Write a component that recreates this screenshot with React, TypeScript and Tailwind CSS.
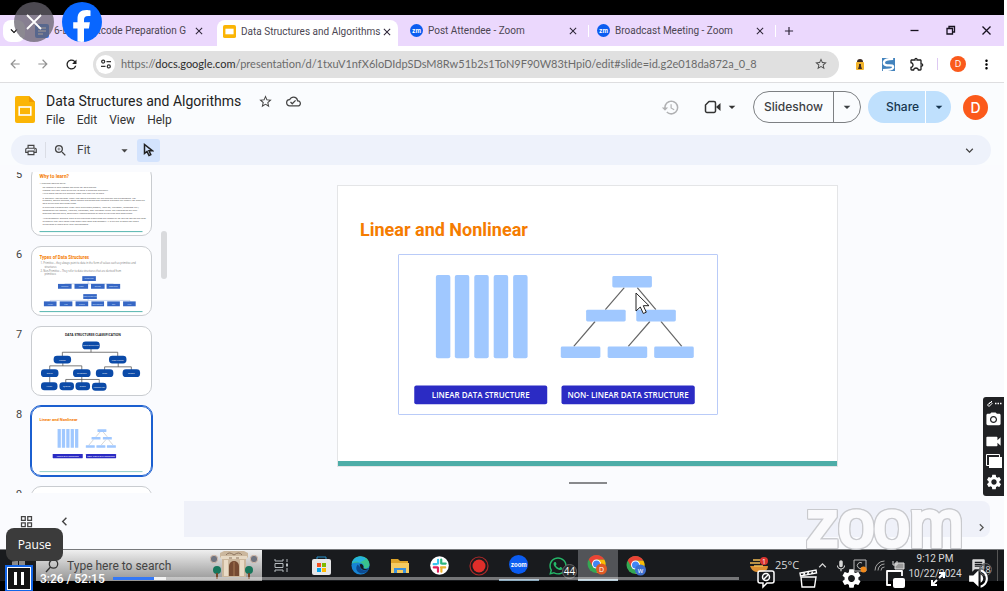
import React from "react";
import {
  MdArrowDropDown, MdCameraAlt, MdClose, MdExpandLess, MdExpandMore, MdHistory, MdMoreVert,
  MdOutlineCloudDone, MdOutlineExtension, MdOutlinePrint, MdRefresh, MdSettings, MdStarBorder,
  MdVideocam, MdZoomIn, MdArrowBack, MdArrowForward, MdChevronLeft, MdChevronRight, MdAdd,
  MdMic, MdOutlineGridView, MdVolumeUp, MdMessage,
} from "react-icons/md";
import { FaWhatsapp } from "react-icons/fa";

const SANS = "font-['Open_Sans',sans-serif]";

function SlidesMark({ className }: { className: string }) {
  return (
    <svg viewBox="0 0 20 27" className={className} aria-hidden="true">
      <path d="M2 0h12l6 6v19a2 2 0 0 1-2 2H2a2 2 0 0 1-2-2V2a2 2 0 0 1 2-2Z" fill="#fbb505" />
      <path d="m14 0 6 6h-6Z" fill="#f09a00" />
      <rect x="4.2" y="11" width="11.6" height="8" fill="none" stroke="#fff" strokeWidth="1.6" />
    </svg>
  );
}

function ZoomBadge({ label, className }: { label: string; className: string }) {
  return (
    <span className={"flex shrink-0 items-center justify-center rounded-full bg-[#0b5cf0] font-['Inter',sans-serif] font-bold text-white " + className}>
      {label}
    </span>
  );
}

function Tab({ title, icon, active, width }: { title: string; icon: React.ReactNode; active?: boolean; width: string }) {
  return (
    <div className={"flex shrink-0 items-center " + width + (active ? " mt-[5px] h-[26px] rounded-t-lg bg-white pb-[3px]" : " h-8")}>
      {icon}
      <span className="ml-[5px] min-w-0 flex-1 overflow-hidden font-['Roboto',sans-serif] text-[10px] whitespace-nowrap text-[#4b4652]">{title}</span>
      <button aria-label={"Close " + title} className="shrink-0 text-[#2d2538]"><MdClose size={12} /></button>
    </div>
  );
}

function TabStrip() {
  return (
    <div className="flex h-[31px] shrink-0 items-center overflow-hidden bg-[#ebd8fd]">
      <button aria-label="Search tabs" className="ml-[3px] flex h-[22px] w-[22px] shrink-0 items-center justify-center rounded-lg bg-white"><MdExpandMore size={14} /></button>
      <Tab width="w-[192px] pl-[10px] pr-[12px]" title="6-Day Leetcode Preparation G" icon={
        <svg viewBox="0 0 14 14" className="h-[14px] w-[14px] shrink-0" aria-hidden="true"><rect width="14" height="14" rx="2" fill="#3079ed" /><path d="M3 4h8M3 7h8M3 10h5" stroke="#fff" strokeWidth="1.3" /></svg>
      } />
      <Tab active width="w-[181px] pl-[6px] pr-[5px]" title="Data Structures and Algorithms" icon={
        <svg viewBox="0 0 14 14" className="h-[13px] w-[13px] shrink-0" aria-hidden="true"><rect width="14" height="14" rx="2" fill="#fbb505" /><rect x="2.6" y="4" width="8.8" height="6" fill="#fff" /></svg>
      } />
      <Tab width="w-[190px] pl-[12px] pr-[9px]" title="Post Attendee - Zoom" icon={<ZoomBadge label="zm" className="h-[13px] w-[13px] text-[6px]" />} />
      <span className="h-3 w-px shrink-0 bg-white" />
      <Tab width="w-[186px] pl-[8px] pr-[9px]" title="Broadcast Meeting - Zoom" icon={<ZoomBadge label="zm" className="h-[13px] w-[13px] text-[6px]" />} />
      <span className="h-3 w-px shrink-0 bg-white" />
      <button aria-label="New tab" className="ml-[6px] text-[#2d2538]"><MdAdd size={14} /></button>
      <div className="ml-auto flex shrink-0 items-center gap-[25px] pr-[12px] text-[#17121f]">
        <button aria-label="Minimize"><svg width="11" height="11"><path d="M1.500 5.500h8" stroke="currentColor" strokeWidth="1.300" /></svg></button>
        <button aria-label="Restore"><svg width="11" height="11" fill="none" stroke="currentColor" strokeWidth="1.300"><path d="M2 3.500h5.500V9H2zM4 3.500v-2h5.500V7h-2" /></svg></button>
        <button aria-label="Close window"><svg width="11" height="11"><path d="m1.500 1.500 8 8m0-8-8 8" stroke="currentColor" strokeWidth="1.300" /></svg></button>
      </div>
    </div>
  );
}

function AddressBar() {
  return (
    <div className="flex h-9 shrink-0 items-center bg-white pr-[10px] pl-[8px]">
      <button aria-label="Back" className="mr-[14px] text-[#929292]"><MdArrowBack size={14} /></button>
      <button aria-label="Forward" className="mr-[14px] text-[#929292]"><MdArrowForward size={14} /></button>
      <button aria-label="Reload" className="mr-[14px] text-[#222]"><MdRefresh size={15} /></button>
      <div className="flex h-[27px] min-w-0 flex-1 items-center rounded-full bg-[#e0e0e0] pr-[11px] pl-[3px]">
        <button aria-label="Site information" className="mr-[6px] flex h-[19px] w-[19px] shrink-0 items-center justify-center rounded-full bg-white">
          <svg width="10" height="10" fill="none" stroke="#333" strokeWidth="1.300"><circle cx="2.200" cy="2.600" r="1.500" /><path d="M5.500 2.600H10M0 7.400h4.500" /><circle cx="7.800" cy="7.400" r="1.500" /></svg>
        </button>
        <span className="min-w-0 flex-1 overflow-hidden font-['Lato',sans-serif] text-[11px] whitespace-nowrap text-[#6b6b6b]">
          https://<span className="text-[#2c2c2c]">docs.google.com</span>/presentation/d/1txuV1nfX6loDIdpSDsM8Rw51b2s1ToN9F90W83tHpi0/edit#slide=id.g2e018da872a_0_8
        </span>
        <button aria-label="Bookmark" className="text-[#4d4d4d]"><MdStarBorder size={14} /></button>
      </div>
      <div className="flex shrink-0 items-center pl-[17px]">
        <svg width="8" height="12" viewBox="0 0 8 12" className="mr-[18px]" aria-hidden="true"><rect y="4" width="8" height="8" rx="1" fill="#f2b42c" /><path d="M1 4a3 3 0 0 1 6 0Z" fill="#3b2a23" /><path d="M3 6h2v2l1 3H2l1-3Z" fill="#3b2a23" /></svg>
        <svg width="13" height="13" viewBox="0 0 14 14" className="mr-[14px]" aria-hidden="true"><rect width="14" height="14" fill="#4383bd" /><path d="M12 1C5 1 2 2 2 5s3 3 6 3 4 0 4 2-3 3-11 3" fill="none" stroke="#fff" strokeWidth="2.500" /></svg>
        <button aria-label="Extensions" className="text-[#222]"><MdOutlineExtension size={16} /></button>
        <span className="mx-[12px] h-3 w-px bg-[#ddc9f2]" />
        <span className="flex h-[16px] w-[16px] items-center justify-center rounded-full bg-[#fa5a1c] text-[9px] text-white">D</span>
        <button aria-label="Browser menu" className="ml-[13px]"><MdMoreVert size={15} /></button>
      </div>
    </div>
  );
}

function DocHeader() {
  return (
    <header className="flex h-[53px] shrink-0 items-start border-t border-[#dedee0] bg-[#fafcfe] pr-[16px] pl-[15px]">
      <SlidesMark className="mt-[13px] h-[27px] w-5" />
      <div className="ml-[11px] pt-[9px]">
        <div className="flex h-[18px] items-center">
          <h1 className="text-[14px] leading-[18px] whitespace-nowrap text-[#222] font-['Roboto',sans-serif]">Data Structures and Algorithms</h1>
          <button aria-label="Star" className="ml-[17px] text-[#444]"><MdStarBorder size={15} /></button>
          <button aria-label="Saved to Drive" className="ml-[13px] text-[#444]"><MdOutlineCloudDone size={15} /></button>
        </div>
        <nav className="flex gap-[12px] text-[12px] leading-[20px] text-[#333] font-['Roboto',sans-serif]">
          {["File", "Edit", "View", "Help"].map((m) => <button key={m}>{m}</button>)}
        </nav>
      </div>
      <div className="ml-auto flex items-center pt-[8px] font-['Inter',sans-serif] text-[12px] font-medium">
        <button aria-label="Version history" className="mr-[24px] text-[#b0b1b3]"><MdHistory size={19} /></button>
        <button aria-label="Start a call" className="mr-[13px] flex items-center text-[#333]">
          <svg width="18" height="14" viewBox="0 0 18 14"><path d="M5 1.500h5a1.500 1.500 0 0 1 1.500 1.500v8a1.500 1.500 0 0 1-1.500 1.500H3A1.500 1.500 0 0 1 1.500 11V5Z" fill="none" stroke="currentColor" strokeWidth="1.500" strokeLinejoin="round" /><path d="m12 7 4.500-4v8Z" fill="currentColor" /></svg>
          <MdArrowDropDown size={16} className="ml-[2px]" />
        </button>
        <div className="mr-[7px] flex h-8 w-[108px] rounded-full border border-[#7d8083] text-[#3c4043]">
          <button className="flex-1">Slideshow</button>
          <button aria-label="Slideshow options" className="flex w-[27px] items-center justify-center border-l border-[#7d8083]"><MdArrowDropDown size={16} /></button>
        </div>
        <div className="mr-[12px] flex h-8 w-[83px] overflow-hidden rounded-full bg-[#bfe0fd] text-[#16354f]">
          <button className="flex-1 pl-[12px]">Share</button>
          <button aria-label="Share options" className="flex w-[26px] items-center justify-center border-l border-white"><MdArrowDropDown size={16} /></button>
        </div>
        <button aria-label="Account" className="h-[25px] w-[25px] rounded-full bg-[#fb5a1b] text-[14px] text-white">D</button>
      </div>
    </header>
  );
}

function Toolbar() {
  return (
    <div className="shrink-0 bg-[#fafcfe] pr-[13px] pl-[11px]">
      <div className="flex h-[30px] items-center rounded-full bg-[#eef2fb] pr-[14px] pl-[13px] text-[#444]">
        <button aria-label="Print"><MdOutlinePrint size={14} /></button>
        <span className="mx-[7px] h-4 w-px bg-[#dadde5]" />
        <button aria-label="Zoom"><MdZoomIn size={15} /></button>
        <button className="ml-[9px] flex w-[55px] items-center justify-between font-['Roboto',sans-serif] text-[12px]">Fit<MdArrowDropDown size={15} /></button>
        <button aria-label="Select" className="ml-[5px] flex h-[23px] w-[23px] items-center justify-center rounded-[3px] bg-[#d3e3fd]">
          <svg width="11" height="14" viewBox="0 0 11 14"><path d="M1.500 1.500v9l2.500-2 2 4 1.800-.9L6 7.800h3.500Z" fill="none" stroke="#222" strokeWidth="1.500" /></svg>
        </button>
        <button aria-label="Collapse toolbar" className="ml-auto"><MdExpandMore size={15} /></button>
      </div>
    </div>
  );
}

function Structures({ className }: { className: string }) {
  return (
    <svg viewBox="0 0 319 159" className={className} role="img" aria-label="Linear and non-linear data structures">
      <g fill="#a0c8ff">
        {[37, 56, 75.5, 95, 114.5].map((x) => <rect key={x} x={x} y="20" width="14.500" height="83.500" rx="2" />)}
      </g>
      <g stroke="#666" strokeWidth="1.200">
        <path d="m226 32.700-19 22M239 32.700l18.700 22M196.700 66.700l-21.400 25M251.700 66.700l-21.700 25M262.700 66.700l21 25" />
      </g>
      <g fill="#a0c8ff">
        {[[214, 21], [187.700, 55], [238, 55], [162.300, 91.700], [209.300, 91.700], [256, 91.700]].map(([x, y]) => (
          <rect key={x + "-" + y} x={x} y={y} width="39.700" height="11.700" rx="1.500" />
        ))}
      </g>
      <g fill="#2b2bc4"><rect x="15.300" y="131" width="133.400" height="18.800" rx="2" /><rect x="163" y="131" width="133.700" height="18.800" rx="2" /></g>
      <g fill="#fff" fontSize="8" fontWeight="600" textAnchor="middle" fontFamily="Open Sans, sans-serif">
        <text x="82" y="143.500">LINEAR DATA STRUCTURE</text>
        <text x="229.800" y="143.500">NON- LINEAR DATA STRUCTURE</text>
      </g>
    </svg>
  );
}

const HEAD = "Roboto, sans-serif";

function WhyThumb() {
  const lines: [number, number, string][] = [
    [7, 17, "1.Problem-Solving Skills:"],
    [10, 21.5, "To recognize and choose patterns for data scaling"],
    [10, 24.5, "Choose the right data structure to solve a problem efficiently"],
    [10, 27.500, "Write more optimized efficient code that can run to scale"],
    [10, 32.500, "2. Scalable Applications: Many real world systems rely on efficient data processing. For"],
    [10, 35.500, "example, search engines, social media platforms and financial systems rely heavily on effective"],
    [10, 38.500, "data structures and algorithms."],
    [10, 42.500, "3.Interview Preparation: Most tech interviews (Google, Amazon, Microsoft, Facebook etc.)"],
    [10, 45.500, "companies like Google, Amazon, Facebook, and Microsoft often test candidates on their"],
    [10, 48.500, "problem-solving skills, specifically understanding of data structures and algorithms."],
    [10, 53.500, "4.Performance: Efficient data structures and algorithms are essential for writing optimized code"],
    [10, 56.500, "to ensure that your code runs faster and uses less memory. It is critical in apps that need"],
    [10, 59.500, "to perform at scale with your environment."],
  ];
  return (
    <svg viewBox="0 0 121 70" className="h-full w-full" aria-label="Why to learn?">
      <text x="7" y="11" fontSize="5" fontWeight="700" fill="#f57c00" fontFamily={HEAD}>Why to learn?</text>
      {lines.map(([x, y, t]) => <text key={y} x={x} y={y} fontSize="2.400" fill="#444" fontFamily="Open Sans, sans-serif">{t}</text>)}
      <path d="M7 66.500h106" stroke="#50b3ab" strokeWidth="1" />
    </svg>
  );
}

function TypesThumb() {
  const node = (x: number, y: number, t: string, w = 14) => (
    <g key={t + x}><rect x={x} y={y} width={w} height="5" fill="#3667c5" /><text x={x + w / 2} y={y + 3.400} fontSize="2.300" fill="#dce7ff" textAnchor="middle" fontFamily="Open Sans, sans-serif">{t}</text></g>
  );
  return (
    <svg viewBox="0 0 121 70" className="h-full w-full" aria-label="Types of Data Structures">
      <text x="7" y="12" fontSize="4.600" fontWeight="700" fill="#f57c00" fontFamily={HEAD}>Types of Data Structures</text>
      <g fontSize="2.600" fill="#777" fontFamily="Open Sans, sans-serif">
        <text x="8" y="18">1.  Primitive – they always point to data in the form of values such as primitive and</text><text x="12" y="21.500">structures</text>
        <text x="8" y="25.500">2.  Non-Primitive – They refer to data structures that are derived from</text><text x="12" y="29">primitives</text>
      </g>
      <path d="M57 35v3M33 40v-2h50v2M57 52v3M18 57v-2h82v2" fill="none" stroke="#9bb3dd" strokeWidth=".5" />
      {node(51, 30, "Primitive")}
      {node(26, 38, "Integer")}{node(43, 38, "Float")}{node(60, 38, "String")}{node(76, 38, "Boolean")}
      {node(52, 48.500, "Non-Primitive")}
      {["Array", "List", "Tuple", "Dictionary", "Set", "File"].map((t, i) => node(11.500 + i * 16.300, 56, t, 13))}
      <path d="M7 66.500h106" stroke="#50b3ab" strokeWidth="1" />
    </svg>
  );
}

function ClassThumb() {
  const nodes: [number, number, string, number][] = [
    [60, 19, "Data Structure", 18], [30.500, 33.500, "Linear", 18], [87.500, 33.500, "Non-Linear", 18],
    [17.500, 47.500, "Static", 18], [50.500, 47.500, "Dynamic", 18], [74, 47.500, "Tree", 18], [101.500, 47.500, "Graph", 18],
    [17, 61, "Array", 17], [35, 61, "Queue", 15], [51.500, 61, "Stack", 15], [68.500, 61.500, "Linked List", 15],
  ];
  return (
    <svg viewBox="0 0 121 70" className="h-full w-full" aria-label="Data structures classification">
      <text x="62" y="9" fontSize="3.300" fontWeight="700" fill="#222" textAnchor="middle" fontFamily="Open Sans, sans-serif">DATA STRUCTURES CLASSIFICATION</text>
      <path d="M60 22v4M30.500 31v-5h57v5M31 36v4M17.500 45v-5h33v5M88 36v5M74 45v-4h27.500v4M17.500 50v9M50.500 50v9M34 59v-5h34.500v5" fill="none" stroke="#555" strokeWidth=".8" />
      {nodes.map(([x, y, t, w]) => (
        <g key={t}><rect x={x - w / 2} y={y - 4} width={w} height="8" rx="3.500" fill="#0b4aa8" /><text x={x} y={y + 1} fontSize="2.400" fill="#fff" textAnchor="middle" fontFamily="Open Sans, sans-serif">{t}</text></g>
      ))}
    </svg>
  );
}

function LinearThumb() {
  return (
    <svg viewBox="0 0 121 70" className="h-full w-full" aria-label="Linear and Nonlinear">
      <text x="7" y="14.500" fontSize="4.200" fontWeight="700" fill="#f57c00" fontFamily={HEAD}>Linear and Nonlinear</text>
      <svg x="17" y="18" width="74" height="37"><Structures className="" /></svg>
      <path d="M7 66.500h106" stroke="#8ecbc6" strokeWidth="1" />
    </svg>
  );
}

function Filmstrip() {
  const slides: [number, React.ReactNode][] = [[5, <WhyThumb />], [6, <TypesThumb />], [7, <ClassThumb />], [8, <LinearThumb />], [9, null]];
  return (
    <aside className="flex w-[171px] shrink-0 flex-col pt-[7px]">
      <div className="flex min-h-0 flex-1 overflow-hidden">
        <ol className="-mt-[6px] flex flex-1 flex-col gap-[10px] pl-[13px]">
          {slides.map(([n, art]) => (
            <li key={n} className="flex h-[70px] shrink-0">
              <span className="w-[18px] pl-[3px] font-['Roboto',sans-serif] text-[11px] leading-[18px] text-[#444]">{n}</span>
              <button aria-label={"Slide " + n} className={"h-[70px] w-[121px] overflow-hidden rounded-[10px] bg-white " + (n === 8 ? "border border-[#1b5fd0] outline-1 outline-[#1b5fd0]" : "border border-[#c9ccd0]")}>{art}</button>
            </li>
          ))}
        </ol>
        <span className="mt-[59px] mr-[4px] h-[48px] w-[6px] rounded-full bg-[#d9dadd]" />
      </div>
      <div className="flex h-[56px] shrink-0 items-center gap-[22px] pl-[19px] text-[#444]">
        <button aria-label="Grid view"><MdOutlineGridView size={15} /></button>
        <button aria-label="Hide filmstrip"><MdChevronLeft size={17} /></button>
      </div>
    </aside>
  );
}

function Canvas() {
  return (
    <main className="flex min-w-0 flex-1 flex-col">
      <section className="relative mx-auto mt-[20px] flex h-[282px] w-[501px] shrink-0 flex-col border border-[#e4e5e7] bg-white">
        <h2 className="pt-[30px] pl-[22px] text-[18px] leading-[28px] font-bold whitespace-nowrap text-[#f57c00] font-['Roboto',sans-serif]">Linear and Nonlinear</h2>
        <div className="mt-[10px] ml-[60px] w-[320px] rounded-[1px] border border-[#b9cbf8]">
          <Structures className="block w-full" />
        </div>
        <div className="mt-auto h-[5px] bg-[#4dada8]" />
        <svg viewBox="0 0 15 23" className="absolute top-[106px] left-[297px] h-[23px] w-[15px]" aria-hidden="true"><path d="M1 1v18l4.300-4 3 6.500 3-1.300-3-6.500H14Z" fill="#fff" stroke="#222" /></svg>
      </section>
      <span className="mx-auto mt-[15px] h-[2px] w-[38px] shrink-0 bg-[#88898c]" />
      <div className="relative mt-[17px] mr-[14px] ml-[13px] flex h-[36px] items-center justify-end rounded-r-lg bg-[#eff1f9] pr-[1px]">
        <button aria-label="Show side panel" className="mt-4 text-[#555]"><MdChevronRight size={15} /></button>
        <span className="absolute top-[-9px] right-[27px] font-['Liberation_Sans',sans-serif] text-[64px] leading-[65px] text-[#fafafc] [-webkit-text-stroke:4px_#fafafc] [filter:drop-shadow(1px_0_0_#c9cace)_drop-shadow(-1px_0_0_#c9cace)_drop-shadow(0_1px_0_#c9cace)_drop-shadow(0_-1px_0_#c9cace)]">zoom</span>
      </div>
    </main>
  );
}

function Chrome({ badge, color }: { badge: string; color: string }) {
  return (
    <svg viewBox="0 0 22 22" className="h-[22px] w-[22px]" aria-hidden="true">
      <circle cx="9.500" cy="10" r="9" fill="#34a853" />
      <path d="M17.300 5.500A9 9 0 0 1 9.500 19l4-6.500L10 5.500Z" fill="#fbbc05" />
      <path d="M1.700 5.500 6 13l4-3 0-4.500h7.300A9 9 0 0 0 1.700 5.500Z" fill="#ea4335" />
      <circle cx="9.500" cy="10" r="4.500" fill="#fff" /><circle cx="9.500" cy="10" r="3.500" fill="#4285f4" />
      <circle cx="14.500" cy="15" r="5.500" fill={color} />
      <text x="14.500" y="17.500" fontSize="7" fill="#fff" textAnchor="middle" fontFamily="Open Sans, sans-serif">{badge}</text>
    </svg>
  );
}

function Taskbar() {
  const cell = "flex h-full items-center justify-center";
  return (
    <footer className="flex h-8 shrink-0 items-stretch border-t border-[#77797c] bg-[#191b1e] text-white">
      <button aria-label="Start" className="flex w-9 shrink-0 justify-center pt-[10px]">
        <svg width="13" height="13" fill="#8b8b8b"><path d="M0 1.500 6 .7V6H0zM7 .6l6-.6v6H7zM0 7h6v5.500L0 12zM7 7h6v6l-6-.6z" /></svg>
      </button>
      <label className="flex w-[226px] shrink-0 items-center bg-linear-to-b from-[#efefef] to-[#969696] pl-[9px]">
        <svg width="14" height="14" fill="none" stroke="#333" strokeWidth="1.300" aria-hidden="true"><circle cx="8.500" cy="5" r="4.200" /><path d="M5.500 8 1 13" /></svg>
        <input aria-label="Type here to search" placeholder="Type here to search" className="ml-[8px] w-[142px] bg-transparent font-['Roboto',sans-serif] text-[12px] text-[#333] outline-none placeholder:text-[#444]" />
        <svg viewBox="0 0 50 30" className="h-[30px] w-[50px]" aria-hidden="true">
          <circle cx="5" cy="8" r="3.700" fill="#6f7480" stroke="#d2b8a8" /><circle cx="45" cy="8" r="3.700" fill="#6f7480" stroke="#d2b8a8" />
          <path d="M11 6V2l4-2h20l4 2v4l-2 2v18H13V8Z" fill="#cbb79d" /><path d="M12 5h26v3H12Z" fill="#e7d9c4" /><path d="M15 9h4v16h-4zM31 9h4v16h-4z" fill="#e9dbc6" />
          <path d="M17 4q3-4 8 0 5-4 8 0M20 7h3m4 0h3" fill="none" stroke="#8d7560" />
          <path d="M20 25V15a5 5 0 0 1 10 0v10Z" fill="#754a32" /><path d="M25 11v14" stroke="#a97a54" /><path d="M10 27h30v2H10Z" fill="#a49a8c" />
          <circle cx="8" cy="19" r="4" fill="#17765b" /><circle cx="40" cy="19" r="4" fill="#17765b" /><path d="M8 22v6m32-6v6" stroke="#75482b" strokeWidth="2" />
        </svg>
      </label>
      <div className="grid w-[395px] shrink-0 grid-cols-10 items-center">
        <button aria-label="Task view" className={cell}><svg width="15" height="13" fill="none" stroke="#b7bdc0"><path d="M1 0v2h8V0M1 13v-2h8v2M1 4.500h8v4H1zM13 0v3m0 6v4" /><path d="M13 4.500v3" strokeWidth="2" /></svg></button>
        <button aria-label="Microsoft Store" className={cell}><svg width="19" height="20"><path d="M5 4V1h9v3" fill="none" stroke="#2b94cc" /><rect y="3" width="19" height="16" rx="2" fill="#e5e6e8" /><path d="M5 7h4v4H5z" fill="#f25022" /><path d="M10 7h4v4h-4z" fill="#7fba00" /><path d="M5 12h4v4H5z" fill="#00a4ef" /><path d="M10 12h4v4h-4z" fill="#ffb900" /></svg></button>
        <button aria-label="Edge" className={cell}>
          <svg width="19" height="19" viewBox="0 0 20 20"><circle cx="10" cy="10" r="9.500" fill="#1785d4" /><path d="M.8 8C2-2.500 19-2.500 19.500 9c0 3-3 5-6.500 4 3-5-5-8-12.200-5Z" fill="#39c38d" /><path d="M.8 8C2 1 11-2 16 3L9 7C6 4.500 2 6 .8 8Z" fill="#25b3df" /><path d="M7 9c-4 5 1 11 7 9 3-1 4-3 5-4-4 2-9 1-9-2Z" fill="#0c4a91" /><path d="M9 9c2-2 5 1 4 4 1 1 4 1 6 0-2 3-8 2-9-1Z" fill="#191b1e" /></svg>
        </button>
        <button aria-label="File Explorer" className={cell}><svg width="18" height="16"><path d="M0 1h7l2 2h8v3H0z" fill="#dca329" /><path d="M0 5h18v10H0z" fill="#f4cb61" /><path d="M3 15v-5h12v5h-3v-3H6v3z" fill="#3b91dc" /></svg></button>
        <button aria-label="Slack" className={cell}>
          <svg width="19" height="19" viewBox="0 0 20 20"><circle cx="10" cy="10" r="9.800" fill="#fff" /><g strokeWidth="2.300" strokeLinecap="round"><path d="M8.500 4v4M3.800 8.600h3" stroke="#36c5f0" /><path d="M11.800 3.800v4M12.500 8h4" stroke="#2eb67d" /><path d="M11.500 12h4.500M12 13v3.500" stroke="#ecb22e" /><path d="M4 12h4M8.400 12.500v4" stroke="#e01e5a" /></g></svg>
        </button>
        <button aria-label="Recorder" className={cell}><svg width="20" height="20"><circle cx="10" cy="10" r="9" fill="none" stroke="#a82929" strokeWidth="1.200" /><circle cx="10" cy="10" r="6.500" fill="#e02e2a" /></svg></button>
        <button aria-label="Zoom" className={cell + " border-b-2 border-[#8aa9bd]"}><ZoomBadge label="zoom" className="h-[19px] w-[19px] text-[6px]" /></button>
        <button aria-label="WhatsApp" className={cell + " relative text-[#25b768]"}><FaWhatsapp size={20} /><span className="absolute right-[1px] bottom-[2px] flex h-[15px] w-[15px] items-center justify-center rounded-full border border-[#666] bg-[#292b2d] text-[10px] text-white">44</span></button>
        <button aria-label="Google Chrome" className={cell + " border-b-2 border-[#b5cbd8] bg-[#525458]"}><Chrome badge="D" color="#df5a24" /></button>
        <button aria-label="Google Chrome, second profile" className={cell}><Chrome badge="w" color="#3d70ce" /></button>
      </div>
      <div className="ml-auto flex shrink-0 text-[#d9d9d9]">
        <div className="flex h-[31px] items-center">
          <svg width="19" height="17" viewBox="0 0 19 17" aria-hidden="true"><path d="M0 9h18c0 4-3 6-9 6S2 13 0 9Z" fill="#dd9032" /><path d="M3 3h8M0 6h10M4 9h9" stroke="#f0bb54" strokeWidth="1.500" /><circle cx="14" cy="4" r="4" fill="#da3530" /><text x="14" y="6.500" fontSize="7" fill="#fff" textAnchor="middle" fontFamily="Open Sans, sans-serif">1</text></svg>
          <span className="ml-[6px] w-[38px] text-[11px]">25°C</span>
          <span className="flex w-[18px] shrink-0 justify-center"><MdExpandLess size={15} /></span>
          <span className="flex w-[19px] shrink-0 justify-center"><MdMic size={14} /></span>
          <span className="flex w-[20px] shrink-0 justify-center"><svg width="14" height="14"><path d="M1 1h12v11H1z" fill="none" stroke="#bbb" /><path d="M9 4a3 3 0 1 0 0 5" fill="none" stroke="#bbb" /><circle cx="10.500" cy="10.500" r="3" fill="#f18a1c" /></svg></span>
          <span className="flex w-[18px] shrink-0 justify-center"><svg width="11" height="11" fill="none" stroke="#a5a5a5"><path d="M1 10.500A9.500 9.500 0 0 1 10.500 1M4 10.500A6.500 6.500 0 0 1 10.500 4M7 10.500A3.500 3.500 0 0 1 10.500 7" /></svg></span>
          <span className="flex w-[20px] shrink-0 justify-center"><svg width="13" height="9"><path d="M3 2h9v6H3z" fill="#999" stroke="#ddd" /><path d="M1 0v4h4V0" fill="none" stroke="#ddd" /></svg></span>
        </div>
        <div className="w-[54px] pt-[1px] text-center font-['Roboto',sans-serif] text-[10px] leading-[15px]"><div>9:12 PM</div><div>10/22/2024</div></div>
        <div className="relative flex w-[36px] shrink-0 pl-[9px] border-r border-[#555] pt-[8px]"><MdMessage size={15} /><span className="absolute top-[13px] right-[5px] flex h-[13px] w-[13px] items-center justify-center rounded-full border border-[#666] bg-[#292b2d]/60 text-[9px]">18</span></div>
        <div className="w-[6px]" />
      </div>
    </footer>
  );
}

function Recorder() {
  return (
    <div className="absolute top-[397px] right-[3px] flex h-[99px] w-[21px] flex-col items-center justify-between rounded-l-[3px] bg-[#202124] pt-[3px] pb-[5px] text-white">
      <svg width="16" height="7" aria-hidden="true"><path d="m1.500 5 3-3 1.500 1.500L3 6.500zM3 4l3-3" fill="none" stroke="#fff" /><path d="M9 3.500h1.500m1 0H13m1 0h1.500" stroke="#fff" strokeWidth="1.500" /></svg>
      <button aria-label="Take a snapshot"><MdCameraAlt size={17} /></button>
      <button aria-label="Record video"><MdVideocam size={19} /></button>
      <button aria-label="Windows"><svg width="16" height="15"><path d="M.500.500h13v11H.500z" fill="#202124" stroke="#fff" /><path d="M3 3h13v11H3z" fill="#fff" /></svg></button>
      <button aria-label="Recorder settings"><MdSettings size={18} /></button>
    </div>
  );
}

function Player() {
  const slot = "flex w-[43px] shrink-0 items-center justify-center";
  return (
    <>
      <button aria-label="Close video" className="absolute top-[2px] left-[14px] flex h-10 w-10 items-center justify-center rounded-full bg-[#66616c]/75 text-white">
        <svg width="16" height="16"><path d="m1 1 14 14M15 1 1 15" stroke="#fff" strokeWidth="1.800" /></svg>
      </button>
      <a href="#facebook" aria-label="Facebook" className="absolute top-[2px] left-[62px] block h-10 w-10">
        <svg viewBox="0 0 40 40"><circle cx="20" cy="20" r="20" fill="#0866ff" /><path d="M15.500 39.500V26.500h-4.300v-6.200h4.300v-3.100c0-6.300 2.900-9.200 9-9.200 1.200 0 3.200.2 4 .5v5.400h-2.400c-3 0-4.100 1.100-4.100 4v2.400h5.900l-1 6.200H22v13.300a20 20 0 0 1-6.500-.3Z" fill="#fff" /></svg>
      </a>
      <span role="tooltip" className="absolute bottom-[30px] left-[6px] flex h-[33px] w-[57px] items-center justify-center rounded-lg bg-[#3b3b3b] text-[12px] text-white">Pause</span>
      <div className="absolute right-[10px] bottom-0 left-[5px] flex h-[25px] items-center text-white">
        <button aria-label="Pause" className="flex h-[27px] w-[28px] shrink-0 items-center justify-center border-2 border-[#1265e8] bg-[#141414] outline-1 -outline-offset-3 outline-white">
          <svg width="10" height="13"><path d="M0 0h3v13H0zM7 0h3v13H7z" fill="#fff" /></svg>
        </button>
        <span className="w-[80px] shrink-0 pl-[7px] font-['Roboto',sans-serif] text-[12px] leading-[16px] font-medium whitespace-nowrap">3:26 / 52:15</span>
        <div className="flex h-[3px] min-w-0 flex-1 bg-white/40" role="progressbar" aria-label="Playback" aria-valuenow={7}>
          <span className="w-[41px] bg-[#3478f6]" /><span className="w-3 bg-white/80" />
        </div>
        <div className="ml-[5px] flex">
          <button aria-label="Hide comments" className={slot}><svg width="20" height="20" fill="none" stroke="#fff" strokeWidth="1.500"><path d="M4 2h12q2 0 2 2v8q0 2-2 2h-5l-4 4v-4H4q-2 0-2-2V4q0-2 2-2Z" /><circle cx="10" cy="8" r="3.500" /><path d="m7.500 10.500 5-5" /></svg></button>
          <button aria-label="Clips" className={slot}><svg width="20" height="20" fill="none" stroke="#fff" strokeWidth="1.400"><path d="M2 8h15l-1.500 10H3Z" /><path d="m1.500 7-.5-3L17 1l.5 3Zm3-.500L6 3m2.500 2.500L10 2m2.500 3L14 1.500" /></svg></button>
          <button aria-label="Settings" className={slot}><MdSettings size={23} /></button>
          <button aria-label="Picture in picture" className={slot}><svg width="20" height="20"><path d="M6 16H2V2h15v5" fill="none" stroke="#fff" strokeWidth="1.800" strokeLinejoin="round" /><rect x="8" y="9" width="12" height="10" rx="2" fill="#fff" /></svg></button>
          <button aria-label="Full screen" className={slot}><svg width="16" height="16" fill="none" stroke="#fff" strokeWidth="2"><path d="M9 2h5v5M14 2 9 7M7 14H2V9M2 14l5-5" /></svg></button>
          <button aria-label="Volume" className="flex w-[38px] shrink-0 items-center justify-center"><MdVolumeUp size={25} /></button>
        </div>
      </div>
    </>
  );
}

export default function App() {
  return (
    <div className={"relative h-screen min-h-[560px] overflow-hidden bg-white pr-[3px] " + SANS}>
      <div className="flex h-full flex-col bg-black pt-[15px] pb-[10px]">
        <TabStrip />
        <AddressBar />
        <DocHeader />
        <Toolbar />
        <div className="flex min-h-0 flex-1 bg-[#fafbfe]">
          <Filmstrip />
          <Canvas />
        </div>
        <Taskbar />
      </div>
      <Recorder />
      <Player />
    </div>
  );
}
